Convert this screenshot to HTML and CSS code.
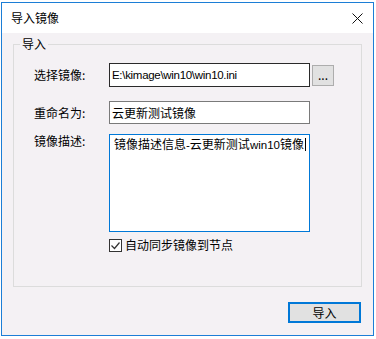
FILE: index.html
```html
<!DOCTYPE html>
<html lang="zh-CN">
<head>
<meta charset="utf-8">
<title>导入镜像</title>
<link rel="stylesheet" href="styles.css">
</head>
<body>
<div class="dialog">
  <div class="titlebar">
    <span class="title">导入镜像</span>
    <svg class="close" width="11" height="11" viewBox="0 0 11 11"><path d="M0.5 0.5 L10.5 10.5 M10.5 0.5 L0.5 10.5" stroke="#111" stroke-width="1" fill="none"/></svg>
  </div>
  <div class="client">
    <fieldset class="group">
      <legend class="legend">导入</legend>
      <div class="form">
        <label class="lbl lbl-mid">选择镜像:</label>
        <div class="pathrow">
          <div class="input input-dark"><span class="latin path">E:\kimage\win10\win10.ini</span></div>
          <div class="browse">...</div>
        </div>
        <label class="lbl lbl-mid row2">重命名为:</label>
        <div class="input input-gray row2">云更新测试镜像</div>
        <label class="lbl lbl-top row3">镜像描述:</label>
        <div class="textarea row3">镜像描述信息<span class="latin">-</span>云更新测试<span class="latin">win10</span>镜像<span class="caret"></span></div>
        <span class="spacer"></span>
        <div class="check">
          <span class="box"><svg width="11" height="11" viewBox="0 0 11 11"><path d="M1.5 5.5 L4.5 8.5 L9.5 2.5" stroke="#333" stroke-width="1.2" fill="none"/></svg></span>
          <span class="check-text">自动同步镜像到节点</span>
        </div>
      </div>
    </fieldset>
    <div class="actions">
      <button class="btn">导入</button>
    </div>
  </div>
</div>
</body>
</html>
```
FILE: styles.css
```css
html, body {
  margin: 0;
  padding: 0;
  background: #ffffff;
}
body {
  width: 376px;
  height: 339px;
  overflow: hidden;
  font-family: "Noto Sans CJK SC", "Liberation Sans", sans-serif;
  font-size: 12px;
  color: #000;
}
.dialog {
  margin: 2px 0 0 1px;
  width: 373px;
  height: 334px;
  box-sizing: border-box;
  border: 1px solid #1c7ed6;
  display: flex;
  flex-direction: column;
  background: #f4f1f4;
}
.titlebar {
  height: 30px;
  background: #ffffff;
  display: flex;
  align-items: center;
  justify-content: space-between;
  padding: 0 10px 0 9px;
}
.title {
  line-height: 14px;
}
.close {
  display: block;
}
.client {
  flex: 1;
  padding: 4px 11px 0 11px;
}
.group {
  margin: 0;
  padding: 12px 0 0 20px;
  min-width: 0;
  height: 250px;
  box-sizing: border-box;
  border: 1px solid #dcdcdc;
}
.legend {
  padding: 0 2px;
  margin-left: -14px;
  line-height: 14px;
}
.form {
  display: grid;
  grid-template-columns: 75px auto;
  justify-content: start;
}
.lbl {
  line-height: 14px;
}
.lbl-mid {
  align-self: center;
}
.lbl-top {
  align-self: start;
  margin-top: 0;
}
.latin {
  font-family: "Liberation Sans", sans-serif;
  font-size: 11.5px;
}
.path {
  letter-spacing: -0.3px;
}
.pathrow {
  display: flex;
  align-items: center;
  gap: 2px;
}
.input {
  box-sizing: border-box;
  width: 201px;
  padding: 0 2px;
  display: flex;
  align-items: center;
  background: #fff;
  line-height: 14px;
  white-space: nowrap;
}
.input-dark {
  height: 24px;
  border: 1px solid #2a2a2a;
}
.input-gray {
  height: 23px;
  border: 1px solid #7a7a7a;
}
.row2 {
  margin-top: 14px;
}
.row3 {
  margin-top: 10px;
}
.browse {
  box-sizing: border-box;
  width: 22px;
  height: 21px;
  background: #e1e1e1;
  border: 1px solid #adadad;
  text-align: center;
  line-height: 18px;
}
.textarea {
  box-sizing: border-box;
  width: 201px;
  height: 98px;
  border: 1px solid #0078d7;
  background: #fff;
  padding: 2px 4px;
  line-height: 14px;
  white-space: nowrap;
}
.caret {
  display: inline-block;
  width: 1px;
  height: 13px;
  background: #000;
  vertical-align: -2px;
  margin-left: 1px;
}
.check {
  margin-top: 6px;
  display: flex;
  align-items: center;
  gap: 3px;
  line-height: 14px;
}
.box {
  box-sizing: border-box;
  width: 13px;
  height: 13px;
  border: 1px solid #333;
  background: #fff;
  display: flex;
}
.box svg {
  display: block;
}
.actions {
  display: flex;
  justify-content: flex-end;
  margin-top: 15px;
  padding-right: 1px;
}
.btn {
  box-sizing: border-box;
  width: 73px;
  height: 21px;
  margin: 0;
  padding: 0;
  background: #e1e1e1;
  border: 2px solid #0078d7;
  font-family: "Noto Sans CJK SC", "Liberation Sans", sans-serif;
  font-size: 12px;
  line-height: 14px;
  color: #000;
}
```
